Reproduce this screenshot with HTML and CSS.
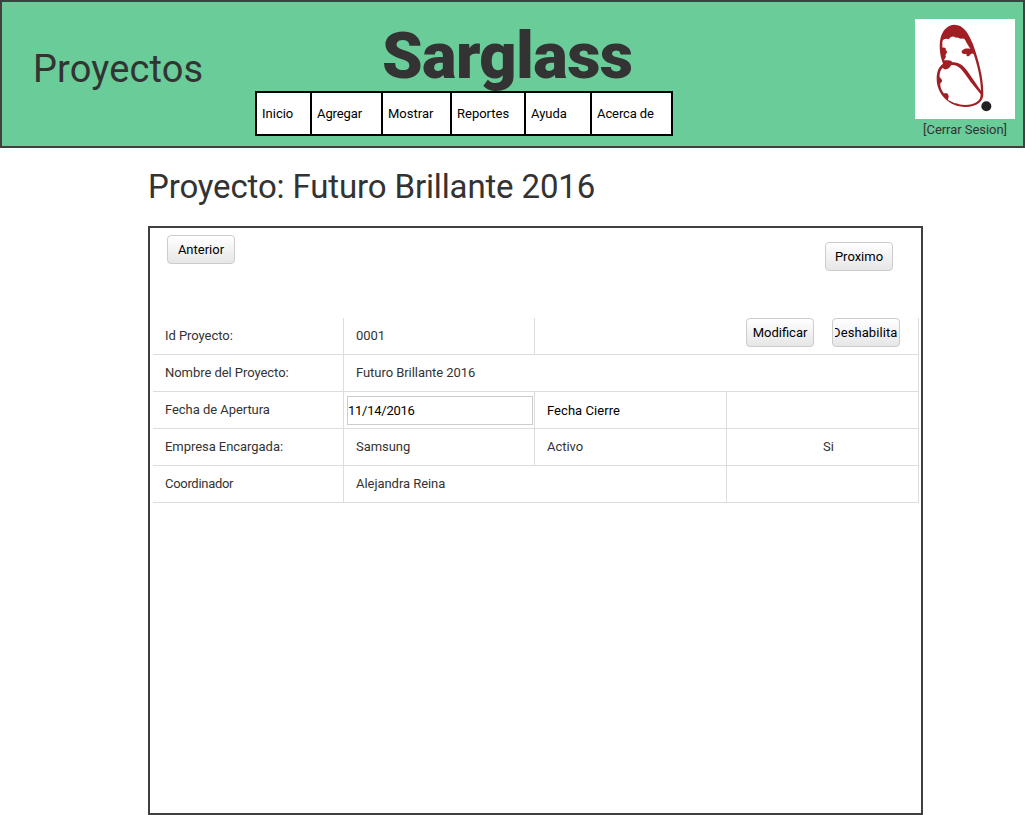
FILE: index.html
```html
<!DOCTYPE html>
<html lang="es">
<head>
<meta charset="utf-8">
<title>Sarglass - Proyectos</title>
<link rel="stylesheet" href="styles.css">
</head>
<body>
<header class="header">
  <h2 class="section-name">Proyectos</h2>
  <div class="brand">
    <h1 class="brand-name">Sarglass</h1>
    <nav class="menu">
      <a class="menu-item inicio">Inicio</a>
      <a class="menu-item agregar">Agregar</a>
      <a class="menu-item mostrar">Mostrar</a>
      <a class="menu-item reportes">Reportes</a>
      <a class="menu-item ayuda">Ayuda</a>
      <a class="menu-item acerca">Acerca de</a>
    </nav>
  </div>
  <div class="account">
    <svg class="logo" viewBox="30 27 300 300" aria-hidden="true">
      <path class="wing" fill-rule="evenodd" d="M148 44C176 44 191 71 204 103C219 145 235 200 235 250C236 272 220 291 180 291C135 291 96 255 95 208C95 184 101 171 114 161C104 135 101 105 108 79C116 56 132 44 148 44ZM112 96C113 88 122 84 132 88C136 78 146 77 152 83C160 80 163 87 170 86C177 83 181 89 183 95L196 117C181 113 169 120 170 127C172 133 178 132 184 131C183 139 191 142 195 134C201 130 204 130 206 133C217 165 227 205 228 242C210 218 188 180 173 167C160 158 151 156 143 157C136 149 126 151 117 151C119 145 126 141 121 135C128 128 127 123 122 120C125 114 119 111 112 113ZM119 178C128 179 134 174 138 166C162 159 181 194 197 216L227 253C228 273 210 285 180 285C169 285 160 283 155 280C147 281 143 276 130 271C127 266 134 261 130 256C130 249 122 250 116 250C109 240 105 231 106 220C115 214 111 208 104 202C103 190 107 178 113 174Z"/>
      <circle class="dot" cx="244" cy="289" r="15"/>
    </svg>
    <a class="logout">[Cerrar Sesion]</a>
  </div>
</header>
<main class="content">
  <h2 class="title">Proyecto: Futuro Brillante 2016</h2>
  <section class="panel">
    <div class="pager">
      <button class="btn">Anterior</button>
      <button class="btn next">Proximo</button>
    </div>
    <div class="details">
      <div class="cell">Id Proyecto:</div>
      <div class="cell">0001</div>
      <div class="cell span-2 actions">
        <button class="btn">Modificar</button>
        <button class="btn"><span>Deshabilitar</span></button>
      </div>
      <div class="cell">Nombre del Proyecto:</div>
      <div class="cell span-3">Futuro Brillante 2016</div>
      <div class="cell">Fecha de Apertura</div>
      <div class="cell field"><input class="date" type="text" value="11/14/2016"></div>
      <div class="cell closing">Fecha Cierre</div>
      <div class="cell"></div>
      <div class="cell">Empresa Encargada:</div>
      <div class="cell">Samsung</div>
      <div class="cell">Activo</div>
      <div class="cell state">Si</div>
      <div class="cell coordinator">Coordinador</div>
      <div class="cell span-2">Alejandra Reina</div>
      <div class="cell"></div>
    </div>
  </section>
</main>
</body>
</html>
```
FILE: styles.css
```css
* { box-sizing: border-box; }
body { margin: 0; background: #fff; color: #333; font: 13px/18px Roboto, sans-serif; }
h1, h2 { margin: 0; }
.header { display: flex; height: 148px; border: 2px solid #404040; background: #69cc99; }
.section-name { width: 253px; padding: 43px 0 0 31px; font-size: 38px; line-height: 48px; font-weight: 400; letter-spacing: 0.15px; }
.brand { width: 418px; padding-top: 15px; }
.brand-name { height: 74px; padding-left: 127px; font-size: 65px; line-height: 78px; font-weight: 900; letter-spacing: -0.65px; white-space: nowrap; }
.menu { display: flex; position: relative; height: 45px; border: 2px solid #000; background: #fff; color: #000; line-height: 41px; }
.menu-item { padding-left: 5px; border-right: 2px solid #000; white-space: nowrap; }
.inicio { width: 55px; }
.agregar { width: 71px; letter-spacing: -0.1px; }
.mostrar { width: 69px; }
.reportes { width: 74px; }
.ayuda { width: 66px; }
.acerca { border-right: 0; letter-spacing: -0.1px; }
.account { display: flex; flex-direction: column; align-items: center; width: 100px; margin: 17px 8px 0 auto; }
.logo { width: 100px; height: 100px; background: #fff; }
.wing { fill: #a01f24; }
.dot { fill: #222; }
.logout { margin-top: 2px; letter-spacing: -0.05px; white-space: nowrap; }
.content { width: 775px; margin-left: 148px; }
.title { height: 78px; padding-top: 18px; font-size: 33px; line-height: 42px; font-weight: 400; letter-spacing: -0.14px; white-space: nowrap; }
.panel { height: 589px; border: 2px solid #404040; padding: 7px 3px; }
.pager { display: flex; justify-content: space-between; height: 83px; padding: 0 25px 0 14px; }
.btn { display: block; width: 68px; height: 29px; padding: 0; border: 1px solid #ccc; border-radius: 4px; background: linear-gradient(#fff, #e6e6e6); color: #000; font: 13px/18px Roboto, sans-serif; }
.next { margin-top: 7px; }
.btn span { display: flex; justify-content: center; width: 62px; margin: 0 2px; padding-left: 2px; overflow: hidden; letter-spacing: 0.08px; }
.details { display: grid; grid-template-columns: 191px 191px 192px 192px; grid-auto-rows: 37px; letter-spacing: -0.05px; }
.cell { border-right: 1px solid #ddd; border-bottom: 1px solid #ddd; padding: 9px 12px; }
.span-2 { grid-column: span 2; }
.span-3 { grid-column: span 3; }
.actions { display: flex; justify-content: flex-end; gap: 18px; padding: 0 18px; }
.field { padding: 4px 1px 0 3px; }
.date { display: block; width: 186px; height: 29px; padding: 0; border: 1px solid #ccc; background: #fff; color: #000; font: 13px Roboto, sans-serif; letter-spacing: -0.25px; }
.closing { padding-top: 10px; color: #000; letter-spacing: 0.05px; }
.coordinator { letter-spacing: -0.3px; }
.state { padding-right: 0; text-align: center; }
```
